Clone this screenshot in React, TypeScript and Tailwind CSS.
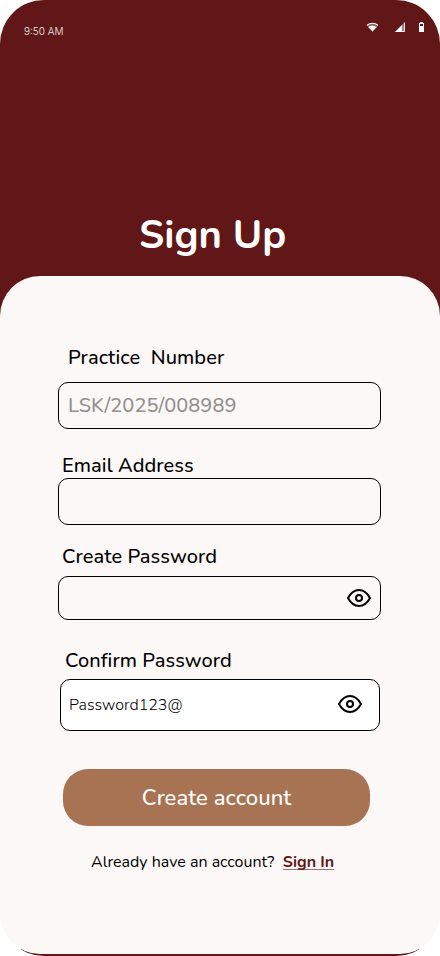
import React from "react";

const sans = "font-['Nunito','Open_Sans',sans-serif]";

function Label({ children, className }: { children: React.ReactNode; className: string }) {
  return (
    <label className={`block h-[26px] whitespace-pre text-[20px] leading-[26px] font-medium tracking-[0.08px] text-black ${className}`}>
      {children}
    </label>
  );
}

function Eye() {
  return (
    <svg width="26" height="20" viewBox="0 0 26 20" fill="none" stroke="#000" strokeWidth="2" strokeLinejoin="round">
      <path d="M2 10C5 4.500 8.700 2 13 2S21 4.500 24 10C21 15.500 17.300 18 13 18S5 15.500 2 10Z" />
      <circle cx="13" cy="10" r="3" />
    </svg>
  );
}

function StatusBar() {
  return (
    <div className="flex h-[60px] justify-between pl-[24px] pr-[16px]">
      <span className="mt-[25px] font-['Inter',sans-serif] text-[10px] leading-[13px] font-light text-[#f2eaea]">
        9:50 AM
      </span>
      <div className="mt-[22px] flex h-[10px] text-white">
        <svg className="mr-[16px]" width="13" height="10" viewBox="0 0 13 10" fill="none">
          <path d="M1 3.300Q6.500-.8 12 3.300" stroke="currentColor" strokeWidth="1.200" />
          <path d="M.8 3.500Q6.500-.8 12.200 3.500L6.500 9.500Z" fill="currentColor" fillOpacity=".3" />
          <path d="M2.200 5Q6.500 1.800 10.800 5L6.500 9.500Z" fill="currentColor" />
        </svg>
        <svg className="mr-[14px]" width="10" height="10" viewBox="0 0 10 10">
          <path d="M0 10L10 0V10Z" fill="currentColor" fillOpacity=".45" />
          <path d="M0 10L7 3V10Z" fill="currentColor" />
          <path d="M9.500 .5V9.500H7" fill="none" stroke="currentColor" strokeWidth=".8" />
        </svg>
        <svg width="5" height="10" viewBox="0 0 5 10">
          <path d="M0 1H1.300V0H3.700V1H5V10H0Z" fill="currentColor" />
          <path d="M1 2H4V4H1Z" fill="#611818" />
        </svg>
      </div>
    </div>
  );
}

export default function App() {
  return (
    <main className={`${sans} flex h-[956px] w-[440px] flex-col overflow-hidden rounded-[44px] bg-[linear-gradient(#611717_400px,#fcf8f7_400px,#fcf8f7_949px,#611717_949px)]`}>
      <header className="h-[276px] shrink-0">
        <StatusBar />
        <h1 className="mt-[148px] ml-[139px] h-[54px] whitespace-nowrap text-[40px] leading-[54px] font-bold text-white">
          Sign Up
        </h1>
      </header>
      <form className="flex h-[678px] flex-col rounded-[40px] bg-[#fcf8f7]">
        <Label className="mt-[69px] ml-[68px]">Practice  Number</Label>
        <div className="mt-[11px] ml-[58px] flex h-[47px] w-[323px] items-center rounded-[10px] border border-black pl-[9px]">
          <span className="text-[20px] leading-[26px] font-medium tracking-[0.03px] text-[#929090]">LSK/2025/008989</span>
        </div>
        <Label className="mt-[24px] ml-[62px]">Email Address</Label>
        <div className="-mt-[1px] ml-[58px] h-[47px] w-[323px] rounded-[10px] border border-black" />
        <Label className="mt-[19px] ml-[62px]">Create Password</Label>
        <div className="mt-[6px] ml-[58px] flex h-[44px] w-[323px] items-center justify-end rounded-[10px] border border-black pr-[8px]">
          <Eye />
        </div>
        <Label className="mt-[28px] ml-[65px]">Confirm Password</Label>
        <div className="mt-[5px] ml-[60px] flex h-[52px] w-[320px] items-center justify-between rounded-[10px] border border-black bg-white pr-[16px] pl-[8px]">
          <span className="text-[16px] leading-[22px] font-light text-black">Password123@</span>
          <span className="-mt-[2px]"><Eye /></span>
        </div>
        <button type="button" className="mt-[38px] ml-[63px] h-[57px] w-[307px] shrink-0 rounded-[25px] bg-[#a87352] pt-[1px] text-[22px] font-medium tracking-[0.08px] text-white">
          Create account
        </button>
        <p className="mt-[25px] ml-[91px] flex h-[22px] gap-[8.500px] whitespace-nowrap text-[16px] leading-[22px] text-black">
          <span>Already have an account?</span>
          <a className="font-bold text-[#611717] underline decoration-[#611717]/60 decoration-1 underline-offset-2 [text-decoration-skip-ink:none]">Sign In</a>
        </p>
      </form>
    </main>
  );
}
